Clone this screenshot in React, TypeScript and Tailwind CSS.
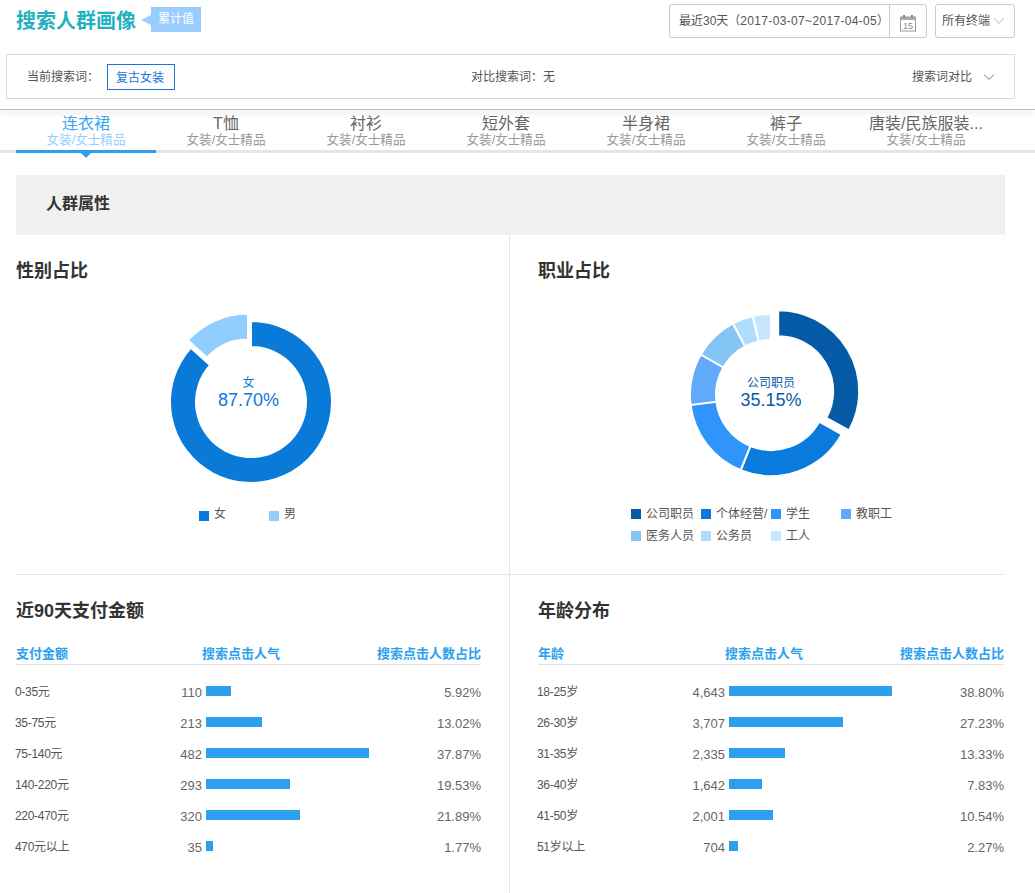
import React from "react";

const fontStack = "font-['Liberation_Sans','Noto_Sans_CJK_SC',sans-serif]";

type Slice = { from: number; to: number; color: string; dx?: number; dy?: number };

function ringPath(cx: number, cy: number, r0: number, r1: number, from: number, to: number) {
  const pt = (r: number, a: number) => {
    const rad = (a * Math.PI) / 180;
    return `${(cx + r * Math.sin(rad)).toFixed(2)} ${(cy - r * Math.cos(rad)).toFixed(2)}`;
  };
  const large = to - from > 180 ? 1 : 0;
  return `M${pt(r1, from)}A${r1} ${r1} 0 ${large} 1 ${pt(r1, to)}L${pt(r0, to)}A${r0} ${r0} 0 ${large} 0 ${pt(r0, from)}Z`;
}

const Donut: React.FC<{ slices: Slice[] }> = ({ slices }) => (
  <svg width="200" height="200" viewBox="0 0 200 200" className="block">
    {slices.map((s, i) => (
      <path
        key={i}
        d={ringPath(100 + (s.dx ?? 0), 100 + (s.dy ?? 0), 55, 81, s.from, s.to)}
        fill={s.color}
        stroke="#fff"
        strokeWidth="2"
      />
    ))}
  </svg>
);

const genderSlices: Slice[] = [
  { from: 0, to: 312, color: "#0a7ad9" },
  { from: 312, to: 360, color: "#91cdff", dx: -3, dy: -7.5 },
];

const jobSlices: Slice[] = [
  { from: 0, to: 119, color: "#065ba6", dx: 7.2, dy: -3.8 },
  { from: 119, to: 202, color: "#0a7bdc" },
  { from: 202, to: 263, color: "#3095fb" },
  { from: 263, to: 300, color: "#61a9fb" },
  { from: 300, to: 332, color: "#84c5f5" },
  { from: 332, to: 347, color: "#b0dcfd" },
  { from: 347, to: 360, color: "#c5e6fd" },
];

const tabs = ["连衣裙", "T恤", "衬衫", "短外套", "半身裙", "裤子", "唐装/民族服装..."];

const payRows = [
  { label: "0-35元", num: "110", w: 25, pct: "5.92%" },
  { label: "35-75元", num: "213", w: 56, pct: "13.02%" },
  { label: "75-140元", num: "482", w: 163, pct: "37.87%" },
  { label: "140-220元", num: "293", w: 84, pct: "19.53%" },
  { label: "220-470元", num: "320", w: 94, pct: "21.89%" },
  { label: "470元以上", num: "35", w: 7, pct: "1.77%" },
];

const ageRows = [
  { label: "18-25岁", num: "4,643", w: 163, pct: "38.80%" },
  { label: "26-30岁", num: "3,707", w: 114, pct: "27.23%" },
  { label: "31-35岁", num: "2,335", w: 56, pct: "13.33%" },
  { label: "36-40岁", num: "1,642", w: 33, pct: "7.83%" },
  { label: "41-50岁", num: "2,001", w: 44, pct: "10.54%" },
  { label: "51岁以上", num: "704", w: 9, pct: "2.27%" },
];

const jobLegend = [
  { name: "公司职员", color: "bg-[#065ba6]" },
  { name: "个体经营/", color: "bg-[#0a7bdc]" },
  { name: "学生", color: "bg-[#3095fb]" },
  { name: "教职工", color: "bg-[#61a9fb]" },
  { name: "医务人员", color: "bg-[#84c5f5]" },
  { name: "公务员", color: "bg-[#b0dcfd]" },
  { name: "工人", color: "bg-[#c5e6fd]" },
];

const LegendItem: React.FC<{ name: string; color: string; low?: boolean }> = ({ name, color, low }) => (
  <div className="w-[70px] h-[22px] flex items-center overflow-hidden whitespace-nowrap">
    <span className={`w-[10px] h-[10px] shrink-0 ${low ? "mt-[4px]" : ""} ${color}`} />
    <span className="ml-[5px] text-xs text-[#555]">{name}</span>
  </div>
);

const RankTable: React.FC<{
  title: string;
  head: string;
  wide?: boolean;
  rows: { label: string; num: string; w: number; pct: string }[];
}> = ({ title, head, wide, rows }) => (
  <div className={wide ? "w-[466px]" : "w-[465px]"}>
    <h3 className="pt-6 text-lg leading-6 font-bold text-[#333]">{title}</h3>
    <div className="mt-[21px] h-[21px] border-b border-[#e3e3e3] flex text-[13px] leading-5 font-bold text-[#2ca0ee]">
      <span className={wide ? "w-[187px]" : "w-[186px]"}>{head}</span>
      <span>搜索点击人气</span>
      <span className="ml-auto">搜索点击人数占比</span>
    </div>
    <div className="mt-[10px]">
      {rows.map((r) => (
        <div key={r.label} className="h-[31px] flex items-center">
          <span className={`-ml-px pt-[3px] text-xs tracking-[-0.3px] text-[#555] ${wide ? "w-[142px]" : "w-[141px]"}`}>{r.label}</span>
          <span className="w-[46px] pt-[4px] text-right text-[13px] text-[#666]">{r.num}</span>
          <div className="ml-[4px] h-[10px] bg-[#2ca0ee]" style={{ width: r.w }} />
          <span className="ml-auto pt-[4px] text-[13px] text-[#666]">{r.pct}</span>
        </div>
      ))}
    </div>
  </div>
);

export default function App() {
  return (
    <div className={`w-[1035px] h-[893px] overflow-hidden bg-white ${fontStack}`}>
      {/* header */}
      <div className="h-[54px] pl-4 pr-5 flex items-start">
        <h1 className="mt-[9px] text-xl leading-6 font-bold text-[#1fb2be]">搜索人群画像</h1>
        <div className="ml-[5px] mt-[7px] flex items-center">
          <span className="w-0 h-0 border-y-[5px] border-y-transparent border-r-[10px] border-r-[#99cdff]" />
          <span className="w-[50px] h-[25px] bg-[#99cdff] text-white text-xs leading-[25px] text-center">累计值</span>
        </div>
        <div className="ml-auto mt-[4px] h-[34px] w-[258px] flex border border-[#ccc] rounded-[3px] text-xs text-[#555]">
          <div className="w-[219px] pl-[9px] flex items-center whitespace-nowrap">
            最近30天（<span className="tracking-[0.33px]">2017-03-07~2017-04-05</span>）
          </div>
          <div className="flex-1 border-l border-[#ccc] flex items-center justify-center">
            <svg width="18" height="18" viewBox="0 0 18 18" className="mt-[3px]">
              <rect x="1.5" y="3" width="15" height="14" fill="none" stroke="#999" />
              <rect x="1.5" y="3" width="15" height="3" fill="#aaa" />
              <rect x="4" y="1" width="2" height="3" fill="#888" />
              <rect x="12" y="1" width="2" height="3" fill="#888" />
              <text x="9" y="15" textAnchor="middle" fontSize="9" fill="#888">15</text>
            </svg>
          </div>
        </div>
        <div className="ml-2 mt-[4px] h-[34px] w-[80px] border border-[#ccc] rounded-[3px] flex items-center pl-[6px] text-xs text-[#555]">
          <span>所有终端</span>
          <svg width="12" height="8" viewBox="0 0 12 8" className="ml-[3px]">
            <polyline points="1,1 6,6.5 11,1" fill="none" stroke="#bbb" />
          </svg>
        </div>
      </div>

      {/* search bar */}
      <div className="ml-[6px] w-[1009px] h-[45px] border border-[#d9d9d9] flex items-center text-xs text-[#555]">
        <span className="ml-5 w-[80px]">当前搜索词：</span>
        <span className="mt-[1px] w-[68px] h-[26px] pl-2 border border-[#1a73e0] text-[#1a73e0] leading-[26px]">复古女装</span>
        <span className="ml-[296px]">对比搜索词：无</span>
        <span className="ml-auto">搜索词对比</span>
        <svg width="12" height="8" viewBox="0 0 12 8" className="ml-[11px] mr-[19px]">
          <polyline points="1,1.5 6,6.5 11,1.5" fill="none" stroke="#777" />
        </svg>
      </div>

      {/* shadow line */}
      <div className="mt-[10px] h-[1px] bg-[#bbb] shadow-[0_3px_4px_rgba(0,0,0,0.2)]" />

      {/* tabs */}
      <div className="h-[43px] pl-4 flex border-b-[3px] border-[#e5e5e5]">
        {tabs.map((t, i) => (
          <div
            key={t}
            className={`relative w-[140px] h-[43px] shrink-0 text-center ${i === 0 ? "border-b-[3px] border-[#2ca0ee]" : ""}`}
          >
            <div className={`pt-[5px] text-base leading-[18px] whitespace-nowrap ${i === 0 ? "text-[#3ba5ef]" : "text-[#666]"}`}>{t}</div>
            <div className={`text-[12.6px] leading-[14px] ${i === 0 ? "text-[#99d0fb]" : "text-[#999]"}`}>女装/女士精品</div>
            {i === 0 && (
              <span className="absolute left-[65px] top-[43px] w-0 h-0 border-x-[5px] border-x-transparent border-t-[5px] border-t-[#2ca0ee]" />
            )}
          </div>
        ))}
      </div>

      {/* section */}
      <div className="ml-4 w-[989px] mt-[22px] h-[60px] bg-[#f0f0f0] pl-[30px] pb-[2px] flex items-center text-base font-bold text-[#333]">人群属性</div>

      <div className="ml-4 w-[989px] grid grid-cols-[494px_495px] grid-rows-[340px_318px]">
        <div className="border-r border-b border-[#e5e5e5]">
          <h3 className="pt-6 text-lg leading-6 font-bold text-[#333]">性别占比</h3>
          <div className="relative ml-[134.5px] mt-[19px] w-[200px] h-[200px]">
            <Donut slices={genderSlices} />
            <div className="absolute inset-0 pr-[4px] pb-[18px] flex flex-col items-center justify-center text-[#0a7ad9]">
              <span className="text-xs leading-[14px]">女</span>
              <span className="text-lg leading-[20px]">87.70%</span>
            </div>
          </div>
          <div className="ml-[183px] mt-[1px] flex">
            <LegendItem name="女" color="bg-[#0a7ad9]" low />
            <LegendItem name="男" color="bg-[#91cdff]" low />
          </div>
        </div>
        <div className="pl-[28px] border-b border-[#e5e5e5]">
          <h3 className="pt-6 text-lg leading-6 font-bold text-[#333]">职业占比</h3>
          <div className="relative ml-[133px] mt-[12px] w-[200px] h-[200px]">
            <Donut slices={jobSlices} />
            <div className="absolute inset-0 pb-[4px] flex flex-col items-center justify-center text-[#065ba6]">
              <span className="text-xs leading-[14px]">公司职员</span>
              <span className="text-lg leading-[20px]">35.15%</span>
            </div>
          </div>
          <div className="ml-[93px] mt-[8px] grid grid-cols-[70px_70px_70px_70px]">
            {jobLegend.map((l) => (
              <LegendItem key={l.name} name={l.name} color={l.color} />
            ))}
          </div>
        </div>
        <div className="border-r border-[#e5e5e5]">
          <RankTable title="近90天支付金额" head="支付金额" rows={payRows} />
        </div>
        <div className="pl-[28px]">
          <RankTable title="年龄分布" head="年龄" rows={ageRows} wide />
        </div>
      </div>
    </div>
  );
}
